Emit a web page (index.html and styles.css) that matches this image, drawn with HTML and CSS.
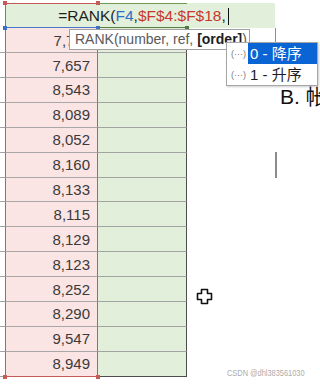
FILE: index.html
```html
<!DOCTYPE html>
<html lang="zh">
<head>
  <meta charset="UTF-8" />
  <title>RANK</title>
  <meta name="viewport" content="width=device-width, initial-scale=1" />
  <link rel="stylesheet" href="styles.css">
</head>
<body>

  <div class="hoja">
    <div class="fila-formula">
      <span>=RANK(</span><span class="ref-azul">F4</span><span>,</span><span class="ref-roja">$F$4:$F$18</span><span>,</span><span class="cursor-texto"></span>
    </div>

    <div class="tabla">
      <div class="fila"><div class="margen"></div><div class="valor">7,711</div><div class="rango"></div></div>
      <div class="fila"><div class="margen"></div><div class="valor">7,657</div><div class="rango"></div></div>
      <div class="fila"><div class="margen"></div><div class="valor">8,543</div><div class="rango"></div></div>
      <div class="fila"><div class="margen"></div><div class="valor">8,089</div><div class="rango"></div></div>
      <div class="fila"><div class="margen"></div><div class="valor">8,052</div><div class="rango"></div></div>
      <div class="fila"><div class="margen"></div><div class="valor">8,160</div><div class="rango"></div></div>
      <div class="fila"><div class="margen"></div><div class="valor">8,133</div><div class="rango"></div></div>
      <div class="fila"><div class="margen"></div><div class="valor">8,115</div><div class="rango"></div></div>
      <div class="fila"><div class="margen"></div><div class="valor">8,129</div><div class="rango"></div></div>
      <div class="fila"><div class="margen"></div><div class="valor">8,123</div><div class="rango"></div></div>
      <div class="fila"><div class="margen"></div><div class="valor">8,252</div><div class="rango"></div></div>
      <div class="fila"><div class="margen"></div><div class="valor">8,290</div><div class="rango"></div></div>
      <div class="fila"><div class="margen"></div><div class="valor">9,547</div><div class="rango"></div></div>
      <div class="fila ultima"><div class="margen"></div><div class="valor">8,949</div><div class="rango"></div></div>
    </div>

    <!-- asas de la seleccion -->
    <span class="asa roja" style="left:3px; top:1px;"></span>
    <span class="asa roja" style="left:96px; top:1px;"></span>
    <span class="asa azul" style="left:3px; top:26px;"></span>
    <span class="asa azul" style="left:96px; top:26px;"></span>
    <span class="asa verde" style="left:185px; top:26px;"></span>
    <span class="asa roja" style="left:3px; top:375px;"></span>
    <span class="asa roja" style="left:96px; top:375px;"></span>

    <div class="borde-celda"></div>

    <div class="ayuda">RANK(number, ref, <b>[order]</b>)</div>

    <div class="texto-diapositiva">B. 帐</div>

    <div class="lista">
      <div class="opcion">
        <span class="icono">(···)</span><span class="etiqueta activa">0 - 降序</span>
      </div>
      <div class="opcion">
        <span class="icono">(···)</span><span class="etiqueta">1 - 升序</span>
      </div>
    </div>

    <span class="cursor-i"></span>

    <svg class="cursor-mover" width="17" height="17" viewBox="0 0 17 17">
      <path d="M5.5 1.5 H11.5 V5.5 H15.5 V11.5 H11.5 V15.5 H5.5 V11.5 H1.5 V5.5 H5.5 Z"
            fill="#fff" stroke="#111" stroke-width="1.6" stroke-linejoin="round" />
    </svg>

    <div class="marca">CSDN @dhl383561030</div>
  </div>

</body>
</html>
```

FILE: styles.css
```css
body {
  margin: 0;
  background: #fff;
  font-family: "Liberation Sans", Arial, sans-serif;
  color: #222;
}
.hoja {
  position: relative;
  width: 320px;
  height: 387px;
  padding-top: 3px;
  box-sizing: border-box;
  overflow: hidden;
}
.fila-formula {
  margin-left: 5px;
  width: 270px;
  height: 25.2px;
  box-sizing: border-box;
  border-left: 1px solid #c55a57;
  display: flex;
  align-items: center;
  justify-content: center;
  font-size: 15.5px;
  color: #1e1e1e;
  padding-top: 1px;
  padding-left: 6px;
  background:
    linear-gradient(to right, #c55a57 0 93px, #6e9a55 93px 182px, transparent 182px) top left / 100% 1px no-repeat border-box,
    linear-gradient(to right, #4a78c8 0 93px, #557d45 93px 182px, transparent 182px) bottom left / 100% 1px no-repeat border-box,
    #e2efda;
}
.ref-azul {
  color: #2e6ec4;
}
.ref-roja {
  color: #c9372c;
}
.cursor-texto {
  display: inline-block;
  width: 1px;
  height: 17px;
  margin-left: 2px;
  background: #111;
}
.tabla {
  display: flex;
  flex-direction: column;
}
.fila {
  display: grid;
  grid-template-columns: 5px 93px 89px;
  height: 24.9px;
}
.margen {
  border-bottom: 1px solid #a3a3a3;
}
.valor {
  box-sizing: border-box;
  background: #fbe5e4;
  border-left: 1px solid #c55a57;
  border-right: 1px solid #c55a57;
  border-bottom: 1px solid #a8a8a8;
  display: flex;
  align-items: center;
  justify-content: flex-end;
  padding-right: 7px;
  font-size: 15px;
  color: #3a3a3a;
}
.rango {
  box-sizing: border-box;
  background: #e2efda;
  border-right: 1px solid #4d4d4d;
  border-bottom: 1px solid #a3a3a3;
}
.ultima .valor {
  border-bottom-color: #c55a57;
}
.ultima .rango {
  border-bottom-color: #4d4d4d;
}
.asa {
  position: absolute;
  width: 4px;
  height: 4px;
}
.asa.roja {
  background: #c55a57;
}
.asa.azul {
  background: #3f6fc4;
}
.asa.verde {
  background: #4f7a3f;
}
.borde-celda {
  position: absolute;
  left: 275px;
  top: 28px;
  width: 1px;
  height: 22px;
  background: #8d8d8d;
}
.ayuda {
  position: absolute;
  left: 69px;
  top: 29px;
  width: 181px;
  height: 21px;
  box-sizing: border-box;
  border: 1px solid #a0a0a0;
  background: #fff;
  padding-left: 5px;
  font-size: 14px;
  line-height: 19px;
  color: #5a5a5a;
  white-space: nowrap;
  overflow: hidden;
}
.ayuda b {
  color: #1e1e1e;
}
.texto-diapositiva {
  position: absolute;
  left: 280px;
  top: 80px;
  font-size: 21px;
  color: #111;
  white-space: nowrap;
  font-family: "Liberation Sans", "Noto Sans CJK SC", sans-serif;
}
.lista {
  position: absolute;
  left: 226px;
  top: 42px;
  width: 92px;
  box-sizing: border-box;
  border: 1px solid #a6a6a6;
  background: #fff;
  box-shadow: 1px 1px 2px rgba(0, 0, 0, 0.2);
}
.opcion {
  display: flex;
  align-items: center;
  height: 21px;
  padding-left: 4px;
}
.icono {
  width: 17px;
  font-size: 9px;
  color: #7a7a7a;
  white-space: nowrap;
}
.etiqueta {
  flex: 1;
  height: 21px;
  line-height: 21px;
  padding-left: 2px;
  font-size: 15px;
  color: #1e1e1e;
  font-family: "Liberation Sans", "Noto Sans CJK SC", sans-serif;
  white-space: nowrap;
}
.etiqueta.activa {
  background: #0b64d4;
  color: #fff;
}
.cursor-i {
  position: absolute;
  left: 275px;
  top: 152px;
  width: 2px;
  height: 26px;
  background: #8c8c8c;
}
.cursor-mover {
  position: absolute;
  left: 196px;
  top: 288px;
}
.marca {
  position: absolute;
  left: 227px;
  top: 367px;
  font-size: 9.5px;
  color: #ababab;
  white-space: nowrap;
  transform: scaleX(0.78);
  transform-origin: left center;
}
```
